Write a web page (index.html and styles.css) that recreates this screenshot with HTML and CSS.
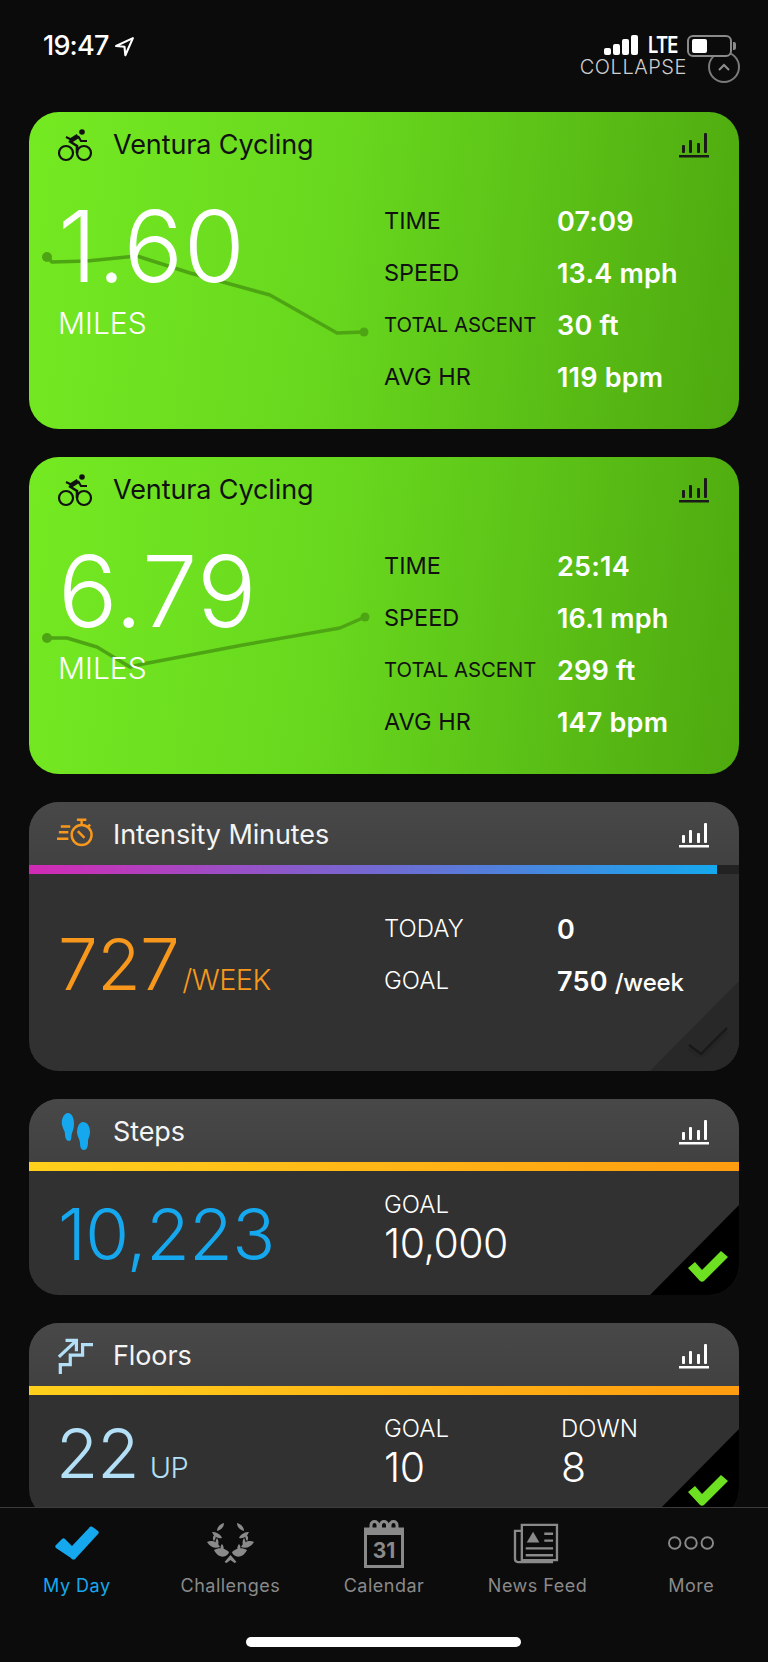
FILE: index.html
```html
<!DOCTYPE html>
<html lang="en">
<head>
  <meta charset="UTF-8">
  <meta name="viewport" content="width=device-width, initial-scale=1.0">
  <title>My Day</title>
  <link rel="stylesheet" href="styles.css">
</head>
<body>
  <div class="screen">
    <!-- Status bar -->
    <div class="status">
      <div class="clock">19:47
        <svg class="loc" viewBox="0 0 20 20"><path d="M18 2 2 9.500l8 .8.8 8z" fill="none" stroke="#fff" stroke-width="2" stroke-linejoin="round"/></svg>
      </div>
      <div class="status-right">
        <div class="signal"><i class="s1"></i><i class="s2"></i><i class="s3"></i><i class="s4"></i></div>
        <span class="lte">LTE</span>
        <div class="battery"><i></i></div>
      </div>
    </div>
    <div class="collapse-row">
      <span>COLLAPSE</span>
      <div class="collapse-btn">
        <svg viewBox="0 0 14 8"><path d="M2 7l5-5 5 5" fill="none" stroke="#8f8f8f" stroke-width="2"/></svg>
      </div>
    </div>

    <!-- Cards -->
    <div class="cards">
      <div class="card activity">
        <svg class="route" viewBox="0 0 710 316"><polyline points="18,145 23,150 58,149 108,144 161,161 241,183 308,221 335,220"/><circle cx="18" cy="145" r="5"/><circle cx="335" cy="220" r="4.500"/></svg>
        <div class="card-head">
          <svg class="head-icon" viewBox="0 0 36 32"><use href="#bike"/></svg>
          <span class="title">Ventura Cycling</span>
          <svg class="chart" viewBox="0 0 30 26"><use href="#bars"/></svg>
        </div>
        <div class="card-body">
          <div class="main">
            <div class="big">1.60</div>
            <div class="unit">MILES</div>
          </div>
          <div class="stats">
            <span class="label">TIME</span><span class="value">07:09</span>
            <span class="label">SPEED</span><span class="value">13.4 mph</span>
            <span class="label small">TOTAL ASCENT</span><span class="value">30 ft</span>
            <span class="label">AVG HR</span><span class="value">119 bpm</span>
          </div>
        </div>
      </div>

      <div class="card activity">
        <svg class="route" viewBox="0 0 710 316"><polyline points="18,181 38,181 68,190 101,210 114,207 214,188 311,171 336,160"/><circle cx="18" cy="181" r="5"/><circle cx="336" cy="160" r="4.500"/></svg>
        <div class="card-head">
          <svg class="head-icon" viewBox="0 0 36 32"><use href="#bike"/></svg>
          <span class="title">Ventura Cycling</span>
          <svg class="chart" viewBox="0 0 30 26"><use href="#bars"/></svg>
        </div>
        <div class="card-body">
          <div class="main">
            <div class="big">6.79</div>
            <div class="unit">MILES</div>
          </div>
          <div class="stats">
            <span class="label">TIME</span><span class="value">25:14</span>
            <span class="label">SPEED</span><span class="value">16.1 mph</span>
            <span class="label small">TOTAL ASCENT</span><span class="value">299 ft</span>
            <span class="label">AVG HR</span><span class="value">147 bpm</span>
          </div>
        </div>
      </div>

      <div class="card dark intensity">
        <div class="card-head">
          <svg class="head-icon" viewBox="0 0 38 38">
            <g fill="none" stroke="#f7981d" stroke-width="2.600">
              <circle cx="26" cy="19" r="10.500"/>
              <path d="M22 15l7 7M21 3h10M26 3v5M35 8l-2.500 2.500M4 10h10M2 16h10M0 23h12"/>
            </g>
          </svg>
          <span class="title">Intensity Minutes</span>
          <svg class="chart" viewBox="0 0 30 26"><use href="#bars"/></svg>
        </div>
        <div class="bar bar-track"><div class="bar-fill"></div></div>
        <div class="card-body">
          <div class="main center">
            <span class="num orange">727</span><span class="suffix orange">/WEEK</span>
          </div>
          <div class="stats">
            <span class="label">TODAY</span><span class="value">0</span>
            <span class="label">GOAL</span><span class="value">750 <span class="per">/week</span></span>
          </div>
        </div>
        <div class="corner corner-dim">
          <svg class="check" viewBox="0 0 42 32">
            <path d="M2 22l12 9L40 5" fill="none" stroke="#252525" stroke-width="5"/>
            <path d="M2 19l12 9L40 2" fill="none" stroke="#191919" stroke-width="2.400"/>
          </svg>
        </div>
      </div>

      <div class="card dark steps">
        <div class="card-head">
          <svg class="head-icon" viewBox="0 0 36 38">
            <g fill="#15a8ee">
              <path d="M11 0c4 0 6 5 6 11 0 4-1 6-2 9-1 3 0 8-3 8-3 0-4-4-4-7 0-3-2-5-3-9C4 6 7 0 11 0z"/>
              <path d="M26 9c4 0 7 4 7 10 0 4-2 6-2 9 0 3 0 9-4 9-3 0-4-3-4-7 0-3-2-5-3-10 0-6 2-11 6-11z"/>
            </g>
          </svg>
          <span class="title">Steps</span>
          <svg class="chart" viewBox="0 0 30 26"><use href="#bars"/></svg>
        </div>
        <div class="bar bar-goal"></div>
        <div class="card-body">
          <div class="main center">
            <span class="num blue">10,223</span>
          </div>
          <div class="goals">
            <div class="goal"><span class="label">GOAL</span><span class="amount">10,000</span></div>
          </div>
        </div>
        <div class="corner"><svg class="check" viewBox="0 0 42 32"><use href="#tick"/></svg></div>
      </div>

      <div class="card dark floors">
        <div class="card-head">
          <svg class="head-icon" viewBox="0 0 38 38">
            <g fill="none" stroke="#b3e0f6" stroke-width="3.400">
              <path d="M3.500 38V28H14V18H27V7h11"/>
              <path d="M2 20 20 3M9 2.500h11.500V14"/>
            </g>
          </svg>
          <span class="title">Floors</span>
          <svg class="chart" viewBox="0 0 30 26"><use href="#bars"/></svg>
        </div>
        <div class="bar bar-goal"></div>
        <div class="card-body">
          <div class="main center">
            <span class="num pale">22</span><span class="suffix pale">UP</span>
          </div>
          <div class="goals">
            <div class="goal"><span class="label">GOAL</span><span class="amount">10</span></div>
            <div class="goal"><span class="label">DOWN</span><span class="amount">8</span></div>
          </div>
        </div>
        <div class="corner"><svg class="check" viewBox="0 0 42 32"><use href="#tick"/></svg></div>
      </div>
    </div>

    <!-- Tab bar -->
    <nav class="tabbar">
      <div class="tab active">
        <svg viewBox="0 0 44 34" class="tab-icon tick-icon"><path d="M1 19l6-6c1-1 2-1 3 0l7 7L34 2c1-2 3-2 5 0l4 3c1 1 1 2 0 3L21 32c-1 2-4 2-5 0L1 22c-1-1-1-2 0-3z" fill="#15a8ee"/></svg>
        <span>My Day</span>
      </div>
      <div class="tab">
        <svg viewBox="0 0 47 40" class="tab-icon laurel">
          <g fill="#8a8a8a">
            <g>
              <path d="M17 0c0 4-3 7-7 8 0-4 3-7 7-8z"/>
              <path d="M5 9c3 0 8 1 10 6-4 1-8-1-10-6z"/>
              <path d="M8 11c1 2 1 5-1 7-2-2-1-5 1-7z"/>
              <path d="M0 19c4-2 10-1 13 5-5 2-10 0-13-5z"/>
              <path d="M10 15c2 3 2 6 0 9-2-3-2-6 0-9z"/>
              <path d="M7 27c5-3 11-2 15 2-1 5-10 8-15-2z"/>
              <path d="M15 21c2 2 2 5 1 7-3-1-3-5-1-7z"/>
            </g>
            <g transform="matrix(-1 0 0 1 47 0)">
              <path d="M17 0c0 4-3 7-7 8 0-4 3-7 7-8z"/>
              <path d="M5 9c3 0 8 1 10 6-4 1-8-1-10-6z"/>
              <path d="M8 11c1 2 1 5-1 7-2-2-1-5 1-7z"/>
              <path d="M0 19c4-2 10-1 13 5-5 2-10 0-13-5z"/>
              <path d="M10 15c2 3 2 6 0 9-2-3-2-6 0-9z"/>
              <path d="M7 27c5-3 11-2 15 2-1 5-10 8-15-2z"/>
              <path d="M15 21c2 2 2 5 1 7-3-1-3-5-1-7z"/>
            </g>
            <path d="M23.500 32l6 7-2 1-4-3-4 3-2-1z"/>
          </g>
        </svg>
        <span>Challenges</span>
      </div>
      <div class="tab">
        <div class="cal">
          <svg viewBox="0 0 40 48" class="cal-frame">
            <g fill="none" stroke="#8a8a8a" stroke-width="3">
              <rect x="1.500" y="9" width="37" height="37.500"/>
              <path d="M7 12V5a3.500 3.500 0 0 1 7 0v7M16.500 12V5a3.500 3.500 0 0 1 7 0v7M26 12V5a3.500 3.500 0 0 1 7 0v7"/>
            </g>
            <rect x="1.500" y="9" width="37" height="6" fill="#8a8a8a"/>
          </svg>
          <span class="cal-day">31</span>
        </div>
        <span>Calendar</span>
      </div>
      <div class="tab">
        <svg viewBox="0 0 48 42" class="tab-icon news">
          <g fill="none" stroke="#8a8a8a" stroke-width="2.400">
            <path d="M46 2H10v36h36zM10 8H3v29a3 3 0 0 0 3 3h36"/>
            <path d="M33 11h9M33 18h9M14 26h28M14 33h28"/>
          </g>
          <path d="M15 20h13l-6.500-11z" fill="#8a8a8a"/>
        </svg>
        <span>News Feed</span>
      </div>
      <div class="tab">
        <svg viewBox="0 0 48 20" class="tab-icon more">
          <g fill="none" stroke="#8a8a8a" stroke-width="2">
            <circle cx="7" cy="10" r="6"/><circle cx="24" cy="10" r="6"/><circle cx="41" cy="10" r="6"/>
          </g>
        </svg>
        <span>More</span>
      </div>
      <div class="home"></div>
    </nav>
  </div>

  <!-- Shared icons -->
  <svg class="defs" width="0" height="0">
    <defs>
      <g id="bike">
        <g fill="none" stroke="#111">
          <circle cx="9" cy="24" r="7" stroke-width="2.200"/>
          <circle cx="27" cy="24" r="7" stroke-width="2.200"/>
          <path d="M13 12l8-5" stroke-width="4.500"/>
          <path d="M21 7l3 5h6" stroke-width="2.200"/>
          <path d="M12 12l8 5v7" stroke-width="2.600"/>
          <path d="M9 8l4 2" stroke-width="2"/>
        </g>
        <circle cx="25" cy="3" r="2.800" fill="#111"/>
      </g>
      <g id="bars">
        <g fill="currentColor">
          <rect x="3" y="13" width="3" height="8" rx="1"/>
          <rect x="10" y="8" width="3" height="13" rx="1"/>
          <rect x="18" y="11" width="3" height="10" rx="1"/>
          <rect x="25" y="1" width="3" height="20" rx="1"/>
          <rect x="0" y="23" width="30" height="2.500"/>
        </g>
      </g>
      <path id="tick" d="M1 18l7-6 7 8L34 1l7 6-24 24c-1 1-3 1-4 0z" fill="#6ce021"/>
    </defs>
  </svg>
</body>
</html>
```

FILE: styles.css
```css
* {
  box-sizing: border-box;
}

body {
  margin: 0;
  background: #0b0b0b;
  font-family: Inter, "Noto Sans", sans-serif;
  color: #fff;
}

.defs {
  position: absolute;
}

.screen {
  position: relative;
  width: 768px;
  height: 1662px;
  overflow: hidden;
  padding: 0 29px;
}

/* Status bar */
.status {
  display: flex;
  justify-content: space-between;
  align-items: flex-start;
  height: 58px;
  margin-right: 7px;
  padding-left: 14px;
  padding-top: 30px;
}

.clock {
  display: flex;
  align-items: center;
  gap: 5px;
  font-size: 27px;
  font-weight: 500;
  line-height: 32px;
  letter-spacing: -0.8px;
}

.loc {
  width: 21px;
  height: 21px;
}

.status-right {
  display: flex;
  align-items: flex-start;
  margin-top: 5px;
  position: relative;
  z-index: 2;
}

.signal {
  display: flex;
  align-items: flex-end;
  gap: 2px;
  height: 20px;
  margin-right: 10px;
}

.signal i {
  display: block;
  width: 7px;
  background: #fff;
  border-radius: 2px;
}

.s1 { height: 7px; }
.s2 { height: 11px; }
.s3 { height: 16px; }
.s4 { height: 20px; }

.lte {
  font-size: 23px;
  font-weight: 600;
  line-height: 20px;
  width: 32px;
  margin-right: 7px;
  letter-spacing: -1px;
  transform: scaleX(0.8);
  transform-origin: left center;
  white-space: nowrap;
}

.battery {
  position: relative;
  width: 45px;
  height: 22px;
  border: 2px solid #8a8a8a;
  border-radius: 6px;
  background: #0b0b0b;
  padding: 2px 3px;
}

.battery i {
  display: block;
  width: 15px;
  height: 14px;
  background: #fff;
  border-radius: 2px;
}

.battery::after {
  content: "";
  position: absolute;
  right: -6px;
  top: 5px;
  width: 3px;
  height: 8px;
  background: #8a8a8a;
  border-radius: 0 2px 2px 0;
}

.collapse-row {
  display: flex;
  justify-content: flex-end;
  align-items: center;
  gap: 21px;
  height: 28px;
  margin-top: -5px;
  margin-right: -1px;
  margin-bottom: 31px;
  font-size: 20px;
  font-weight: 300;
  line-height: 18px;
  letter-spacing: 0.55px;
  color: #cfcfcf;
}

.collapse-btn {
  width: 32px;
  height: 32px;
  flex: none;
  border: 2px solid #7a7a7a;
  border-radius: 50%;
  display: flex;
  align-items: center;
  justify-content: center;
}

.collapse-btn svg {
  width: 14px;
  height: 8px;
}

/* Cards */
.cards {
  display: flex;
  flex-direction: column;
  gap: 28px;
}

.card {
  position: relative;
  flex: none;
  overflow: hidden;
  border-radius: 30px;
}

.activity {
  height: 317px;
  background: linear-gradient(98deg, #74ea22 0%, #68d81e 42%, #4ea90f 100%);
  color: #111;
}

.dark {
  background: #313131;
}

.intensity { height: 269px; }
.steps { height: 196px; }
.floors { height: 196px; }

.route {
  position: absolute;
  left: 0;
  top: 0;
  width: 710px;
  height: 316px;
}

.route polyline {
  fill: none;
  stroke: #4ea513;
  stroke-width: 3.5;
  stroke-linejoin: round;
}

.route circle {
  fill: #4ea513;
}

.card-head {
  position: relative;
  display: flex;
  align-items: center;
  height: 63px;
  padding: 2px 30px 0 28px;
}

.dark .card-head {
  background: linear-gradient(#484848, #414141);
}

.head-icon {
  width: 36px;
  height: 38px;
  flex: none;
}

.title {
  margin-left: 20px;
  font-size: 27px;
  letter-spacing: -0.1px;
  flex: 1;
}

.chart {
  width: 30px;
  height: 26px;
  color: #1a1a1a;
}

.dark .chart {
  color: #fff;
}

.dark .title {
  color: #f4f4f4;
}

.bar {
  height: 9px;
}

.bar-track {
  background: #222;
}

.bar-fill {
  width: 688px;
  height: 100%;
  background: linear-gradient(90deg, #d22ab4, #15a8ee);
}

.bar-goal {
  background: linear-gradient(90deg, #ffd01c, #ff9c10);
}

.card-body {
  position: relative;
  display: flex;
}

.main {
  width: 355px;
  flex: none;
  padding: 22px 0 0 29px;
}

.big {
  font-size: 99px;
  font-weight: 300;
  line-height: 98px;
  letter-spacing: 0.6px;
  color: #fff;
}

.unit {
  margin-top: 10px;
  font-size: 30px;
  font-weight: 300;
  line-height: 36px;
  color: #fff;
}

.stats {
  display: grid;
  grid-template-columns: 173px 1fr;
  grid-auto-rows: 52px;
  align-items: center;
  padding-top: 20px;
}

.label {
  font-size: 24px;
  font-weight: 300;
  line-height: 26px;
}

.activity .label {
  font-size: 23.5px;
  font-weight: 400;
}

.activity .label.small {
  font-size: 20.3px;
  white-space: nowrap;
}

.value {
  font-size: 27px;
  font-weight: 600;
  letter-spacing: 0.2px;
  color: #fff;
}

.per {
  font-size: 24px;
  font-weight: 500;
  letter-spacing: -0.2px;
}

.center {
  display: flex;
  align-items: baseline;
}

.num {
  font-size: 71px;
  font-weight: 300;
  letter-spacing: -0.6px;
}

.suffix {
  margin-left: 3px;
  font-size: 29px;
  font-weight: 300;
  letter-spacing: -0.6px;
}

.orange { color: #f7981d; }
.blue { color: #15a8ee; }
.pale { color: #b3e0f6; }

.intensity .main {
  padding-top: 47px;
}

.intensity .stats {
  padding-top: 29px;
}

.steps .main {
  padding-top: 20px;
}

.floors .main {
  padding-top: 16px;
  padding-left: 27px;
}

.floors .num {
  font-size: 69px;
  letter-spacing: -1px;
}

.floors .suffix {
  margin-left: 11px;
}

.goals {
  display: grid;
  grid-template-columns: 177px 176px;
  padding-top: 21px;
}

.goal {
  display: flex;
  flex-direction: column;
}

.amount {
  font-size: 41px;
  font-weight: 300;
  line-height: 50px;
  letter-spacing: -0.5px;
}

/* Goal corners */
.corner {
  position: absolute;
  right: 0;
  bottom: 0;
  width: 89px;
  height: 90px;
  background: #000;
  clip-path: polygon(100% 0, 100% 100%, 0 100%);
}

.corner-dim {
  background: #282828;
}

.check {
  position: absolute;
  right: 10px;
  bottom: 13px;
  width: 42px;
  height: 32px;
}

/* Tab bar */
.tabbar {
  position: absolute;
  left: 0;
  right: 0;
  top: 1507px;
  bottom: 0;
  display: flex;
  background: #0c0c0c;
  border-top: 1px solid #3c3c3c;
}

.tab {
  flex: 1;
  display: flex;
  flex-direction: column;
  align-items: center;
  height: 92px;
  padding-top: 12px;
  font-size: 18px;
  letter-spacing: 0.5px;
  color: #8a8a8a;
}

.tab > span {
  position: absolute;
  top: 67px;
  line-height: 22px;
}

.tab.active {
  color: #15a8ee;
}

.tab-icon {
  width: 46px;
  height: 46px;
}

.tick-icon {
  width: 44px;
  height: 34px;
  margin-top: 6px;
}

.laurel {
  width: 47px;
  height: 40px;
  margin-top: 3px;
}

.news {
  width: 47px;
  height: 41px;
  margin-top: 3px;
  margin-right: 4px;
}

.more {
  height: 20px;
  margin-top: 13px;
}

.cal {
  position: relative;
  width: 40px;
  height: 46px;
}

.cal-frame {
  display: block;
  width: 40px;
  height: 48px;
}

.cal-day {
  position: absolute;
  left: 0;
  right: 0;
  top: 19px;
  text-align: center;
  font-size: 21px;
  font-weight: 700;
  line-height: 24px;
  letter-spacing: 0;
}

.home {
  position: absolute;
  left: 246px;
  top: 129px;
  width: 275px;
  height: 10px;
  border-radius: 5px;
  background: #fff;
}
```
